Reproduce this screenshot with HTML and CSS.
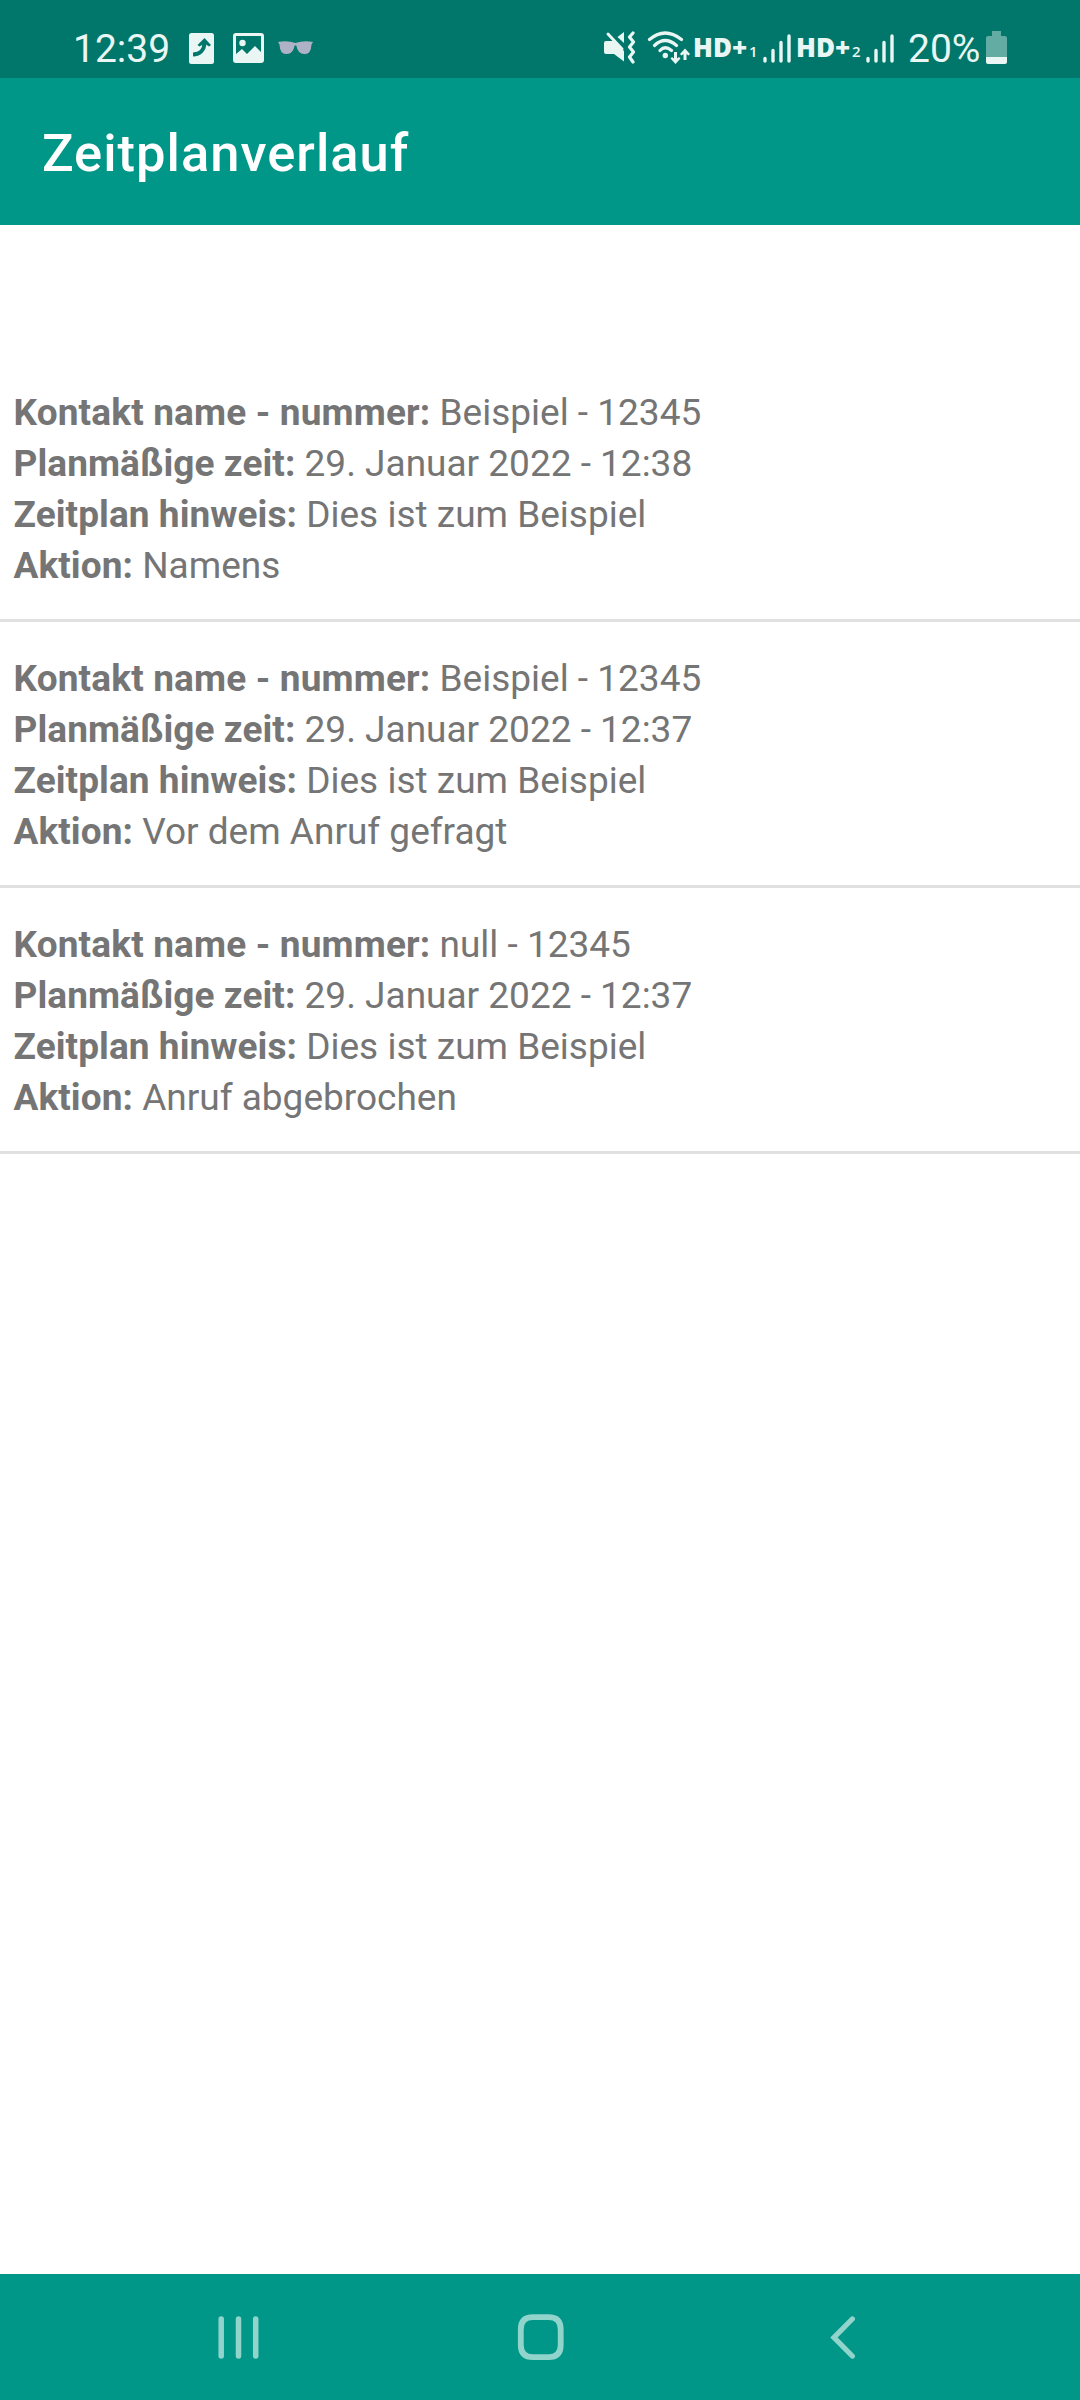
FILE: index.html
```html
<!DOCTYPE html>
<html lang="de">
<head>
<meta charset="utf-8">
<title>Zeitplanverlauf</title>
<link rel="stylesheet" href="styles.css">
</head>
<body>
<div class="screen">
  <header class="status">
    <span class="clock">12:39</span>
    <svg class="notif" width="126" height="34" viewBox="188 31 126 34">
      <rect x="189" y="33" width="25" height="31" rx="2.500" fill="#e9f6f4"/>
      <path d="M193 54.500C200 54.500 204.500 50 204.500 42" fill="none" stroke="#00776a" stroke-width="4"/>
      <path d="M197.500 45L204.500 38L211 45L209 46.500L204.500 43.500L199.500 46.500Z" fill="#00776a"/>
      <path fill-rule="evenodd" fill="#e9f6f4" d="M236 33H261Q264 33 264 36V60Q264 63 261 63H236Q233 63 233 60V36Q233 33 236 33ZM236 36V54L242 49L247 54L255 46L261 52V36Z"/>
      <circle cx="242.500" cy="43" r="3.200" fill="#e9f6f4"/>
      <path d="M278 42Q287 40 295.500 43Q304 40 313 42L311.500 44.500Q311 54 305 54Q298 54.500 296.300 45.500H294.700Q293 54.500 286 54Q280 54 279.500 44.500Z" fill="#afb2c6"/>
    </svg>
    <svg class="radio" width="88" height="34" viewBox="603 31 88 34">
      <g fill="#e9f6f4">
        <path d="M606 41H613L624 51V61.500L614 54H606Q604 54 604 52V43Q604 41 606 41ZM617.500 37L624 32V43Z"/>
        <circle cx="665.300" cy="55.500" r="2.700"/>
        <path d="M675.500 64L670.500 58.500L672 57L674 58.500V52H677V58.500L679 57L680.500 58.500ZM685 48.500L690 54L688.500 55.500L686.500 54V60H683.500V54L681.500 55.500L680 54Z"/>
      </g>
      <g fill="none" stroke="#e9f6f4" stroke-linecap="round" stroke-linejoin="round">
        <path d="M608 34L622 49" stroke-width="3"/>
        <path d="M633 33L629.500 37L633.500 42L629.500 47L633.500 52L629.500 57L633 62" stroke-width="3.200"/>
        <path d="M649.500 39.500Q665 26.500 681.500 39.500M654.500 45.500Q665 35.500 676.500 45.500M660 50.500Q665 45 671.500 50.500" stroke-width="3.200"/>
      </g>
    </svg>
    <span class="hd">HD+</span><span class="sim">1</span>
    <svg class="signal" width="28" height="32" viewBox="0 0 28 32"><path d="M2 26.500V29M10 18.500V29M18 10.500V29M26 4V29" stroke="#e9f6f4" stroke-width="3.400" stroke-linecap="round"/></svg>
    <span class="hd second">HD+</span><span class="sim">2</span>
    <svg class="signal" width="28" height="32" viewBox="0 0 28 32"><path d="M2 26.500V29M10 18.500V29M18 10.500V29M26 4V29" stroke="#e9f6f4" stroke-width="3.400" stroke-linecap="round"/></svg>
    <span class="percent">20%</span>
    <svg class="battery" width="21" height="33" viewBox="0 0 21 33">
      <path d="M6 0H15V5H19Q21 5 21 7V26H0V7Q0 5 2 5H6Z" fill="#62aca3"/>
      <path d="M0 26H21V31Q21 33 19 33H2Q0 33 0 31Z" fill="#e9f6f4"/>
    </svg>
  </header>
  <div class="appbar"><h1>Zeitplanverlauf</h1></div>
  <main class="list">
    <section class="entry">
      <p><b>Kontakt name - nummer:</b> Beispiel - 12345</p>
      <p><b>Planmäßige zeit:</b> 29. Januar 2022 - 12:38</p>
      <p><b>Zeitplan hinweis:</b> Dies ist zum Beispiel</p>
      <p><b>Aktion:</b> Namens</p>
    </section>
    <section class="entry">
      <p><b>Kontakt name - nummer:</b> Beispiel - 12345</p>
      <p><b>Planmäßige zeit:</b> 29. Januar 2022 - 12:37</p>
      <p><b>Zeitplan hinweis:</b> Dies ist zum Beispiel</p>
      <p><b>Aktion:</b> Vor dem Anruf gefragt</p>
    </section>
    <section class="entry">
      <p><b>Kontakt name - nummer:</b> null - 12345</p>
      <p><b>Planmäßige zeit:</b> 29. Januar 2022 - 12:37</p>
      <p><b>Zeitplan hinweis:</b> Dies ist zum Beispiel</p>
      <p><b>Aktion:</b> Anruf abgebrochen</p>
    </section>
  </main>
  <nav class="navbar">
    <svg width="48" height="48" viewBox="0 0 48 48"><path d="M6.200 6V43M23.500 6V43M40.700 6V43" stroke-width="5.500"/></svg>
    <svg width="48" height="48" viewBox="0 0 48 48"><path d="M16 4.200H31.500Q43.700 4.200 43.700 16.400V32Q43.700 44.200 31.500 44.200H16Q3.800 44.200 3.800 32V16.400Q3.800 4.200 16 4.200Z" stroke-width="5.800"/></svg>
    <svg width="48" height="48" viewBox="0 0 48 48"><path d="M33.300 6L15 24.500L33.300 43" stroke-width="5.300" stroke-linejoin="miter"/></svg>
  </nav>
</div>
</body>
</html>
```
FILE: styles.css
```css
* { box-sizing: border-box; }
body { margin: 0; font-family: Roboto, sans-serif; background: #fff; }
.screen { width: 1080px; height: 2400px; display: flex; flex-direction: column; }
.status { height: 78px; flex: none; display: flex; align-items: flex-start; background: #00776a; color: #e9f6f4; padding-left: 73px; white-space: nowrap; }
.status svg { flex: none; margin-top: 31px; }
.clock { width: 115px; flex: none; font-size: 39px; line-height: 46px; margin-top: 26px; }
.status .radio { margin-left: 289px; }
.hd { width: 56px; flex: none; margin: 31px 0 0 2px; font: 800 26px/32px "Open Sans", sans-serif; }
.hd.second { margin-left: 5px; }
.sim { width: 8px; flex: none; margin-top: 42px; font: 600 15px/18px "Open Sans", sans-serif; }
.status .signal { margin: 32px 0 0 6px; }
.percent { width: 78px; flex: none; margin: 26px 0 0 14px; font-size: 39px; line-height: 46px; }
.appbar { height: 147px; flex: none; display: flex; align-items: center; padding: 3px 42px 0; background: #009788; }
.appbar h1 { margin: 0; color: #fff; font-size: 52.5px; font-weight: 500; line-height: 62px; letter-spacing: 1px; }
.list { flex: 1; padding-top: 131px; }
.entry { height: 266px; padding: 31px 13.5px 0; border-bottom: 3px solid #e0e0e0; color: #757575; }
.entry p { margin: 0; font-size: 37px; line-height: 51px; white-space: nowrap; }
.entry b { letter-spacing: 0.07px; }
.entry p:first-child b { letter-spacing: 0.15px; }
.navbar { height: 126px; flex: none; display: flex; gap: 254px; align-items: center; padding-left: 215px; background: #009788; }
.navbar svg { fill: none; stroke: #91d4cc; stroke-linecap: round; }
```
